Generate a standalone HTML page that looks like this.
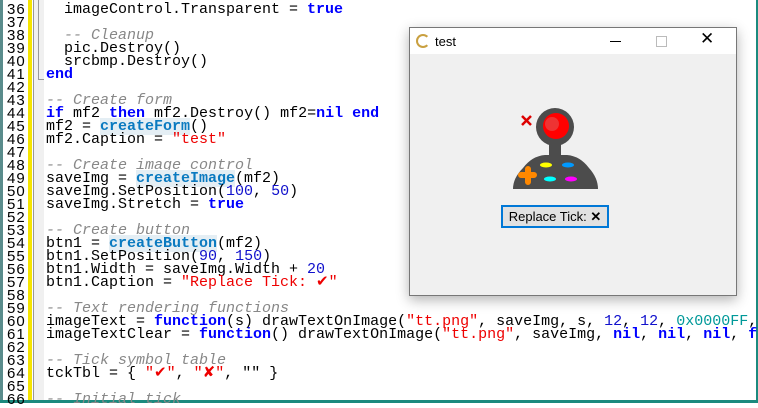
<!DOCTYPE html>
<html><head><meta charset="utf-8"><style>
body{margin:0;width:758px;height:403px;overflow:hidden;background:#fff;position:relative;font-family:"Liberation Mono",monospace}
.l{position:absolute;left:46px;font-size:15px;line-height:13px;white-space:pre;color:#000;height:13px}
.n{position:absolute;left:7px;font-size:15px;line-height:13px;color:#000;font-family:"Liberation Sans",sans-serif;letter-spacing:1px}
.k{color:#00f;font-weight:bold}.c{color:#888;font-style:italic}.s{color:#e00}.f{color:#0a7ac0;background:#e4eef4;font-weight:bold}.d{color:#11c}.h{color:#099}
</style></head><body>
<div style="position:absolute;left:0;top:0;width:3px;height:403px;background:#5a8c8c"></div>
<div style="position:absolute;left:28px;top:0;width:4px;height:403px;background:#f5e400"></div>
<div style="position:absolute;left:33px;top:0;width:10px;height:403px;background:#f0f0f0;border-left:1px solid #999"></div>
<div style="position:absolute;left:38px;top:0;width:1px;height:80px;background:#999"></div>
<div style="position:absolute;left:38px;top:79px;width:6px;height:1px;background:#999"></div>
<div style="position:absolute;left:0;top:400px;width:758px;height:3px;background:#1b8a7e"></div>
<div style="position:absolute;left:756px;top:0;width:2px;height:403px;background:#1b8a7e"></div>
<div id="g"></div>
<script>
var L=[
'  imageControl.Transparent = <span class=k>true</span>','',
'  <span class=c>-- Cleanup</span>','  pic.Destroy()','  srcbmp.Destroy()',
'<span class=k>end</span>','',
'<span class=c>-- Create form</span>',
'<span class=k>if</span> mf2 <span class=k>then</span> mf2.Destroy() mf2=<span class=k>nil</span> <span class=k>end</span>',
'mf2 = <span class=f>createForm</span>()',
'mf2.Caption = <span class=s>"test"</span>','',
'<span class=c>-- Create image control</span>',
'saveImg = <span class=f>createImage</span>(mf2)',
'saveImg.SetPosition(<span class=d>100</span>, <span class=d>50</span>)',
'saveImg.Stretch = <span class=k>true</span>','',
'<span class=c>-- Create button</span>',
'btn1 = <span class=f>createButton</span>(mf2)',
'btn1.SetPosition(<span class=d>90</span>, <span class=d>150</span>)',
'btn1.Width = saveImg.Width + <span class=d>20</span>',
'btn1.Caption = <span class=s>"Replace Tick: ✔"</span>','',
'<span class=c>-- Text rendering functions</span>',
'imageText = <span class=k>function</span>(s) drawTextOnImage(<span class=s>"tt.png"</span>, saveImg, s, <span class=d>12</span>, <span class=d>12</span>, <span class=h>0x0000FF</span>,',
'imageTextClear = <span class=k>function</span>() drawTextOnImage(<span class=s>"tt.png"</span>, saveImg, <span class=k>nil</span>, <span class=k>nil</span>, <span class=k>nil</span>, <span class=k>f</span>','',
'<span class=c>-- Tick symbol table</span>',
'tckTbl = { <span class=s>"✔"</span>, <span class=s>"✘"</span>, "" }','',
'<span class=c>-- Initial tick</span>'];
var h='';for(var i=0;i<L.length;i++){var t=3+i*13;h+='<div class=n style="top:'+t+'px">'+(36+i)+'</div><div class=l style="top:'+t+'px">'+L[i]+'</div>';}
document.getElementById('g').innerHTML=h;
</script>
<div style="position:absolute;left:409px;top:27px;width:326px;height:267px;background:#f0f0f0;border:1px solid #777;box-shadow:0 4px 12px rgba(0,0,0,.3);font-family:'Liberation Sans',sans-serif">
 <div style="position:absolute;left:0;top:0;width:326px;height:26px;background:#fff"></div>
 <div style="position:absolute;left:6px;top:6px;width:10px;height:10px;border:2px solid #c9a040;border-radius:50%;border-right-color:transparent"></div>
 <div style="position:absolute;left:25px;top:6px;font-size:13px">test</div>
 <div style="position:absolute;left:200px;top:13px;width:11px;height:1px;background:#000"></div>
 <div style="position:absolute;left:246px;top:8px;width:9px;height:9px;border:1px solid #bbb"></div>
 <div style="position:absolute;left:290px;top:1px;font-size:17px">✕</div>
 <svg style="position:absolute;left:0;top:0" width="326" height="267">
  <path d="M103 161 Q103 150 113 140 Q122 128 135 127 L157 127 Q170 128 179 140 Q188 150 188 161 Z" fill="#4c4c4c"/>
  <rect x="139" y="113" width="12" height="20" fill="#4c4c4c"/>
  <circle cx="145" cy="99" r="19" fill="#4c4c4c"/>
  <circle cx="146" cy="98" r="13" fill="#f00"/>
  <circle cx="142" cy="96" r="7" fill="#e33"/>
  <path d="M112 88 L121 97 M121 88 L112 97" stroke="#d00" stroke-width="2.5"/>
  <path d="M118 141 v13 M111 147 h13" stroke="#f80" stroke-width="6" stroke-linecap="round"/>
  <ellipse cx="136" cy="137" rx="6" ry="2.5" fill="#ff0"/>
  <ellipse cx="158" cy="137" rx="6" ry="2.5" fill="#09f"/>
  <ellipse cx="140" cy="151" rx="6" ry="2.5" fill="#0ff"/>
  <ellipse cx="161" cy="151" rx="6" ry="2.5" fill="#f0f"/>
 </svg>
 <div style="position:absolute;left:91px;top:177px;width:104px;height:19px;border:2px solid #0078d7;background:#e1e1e1;font-size:13px;line-height:19px;text-align:center">Replace Tick: <b>✕</b></div>
</div>
</body></html>
